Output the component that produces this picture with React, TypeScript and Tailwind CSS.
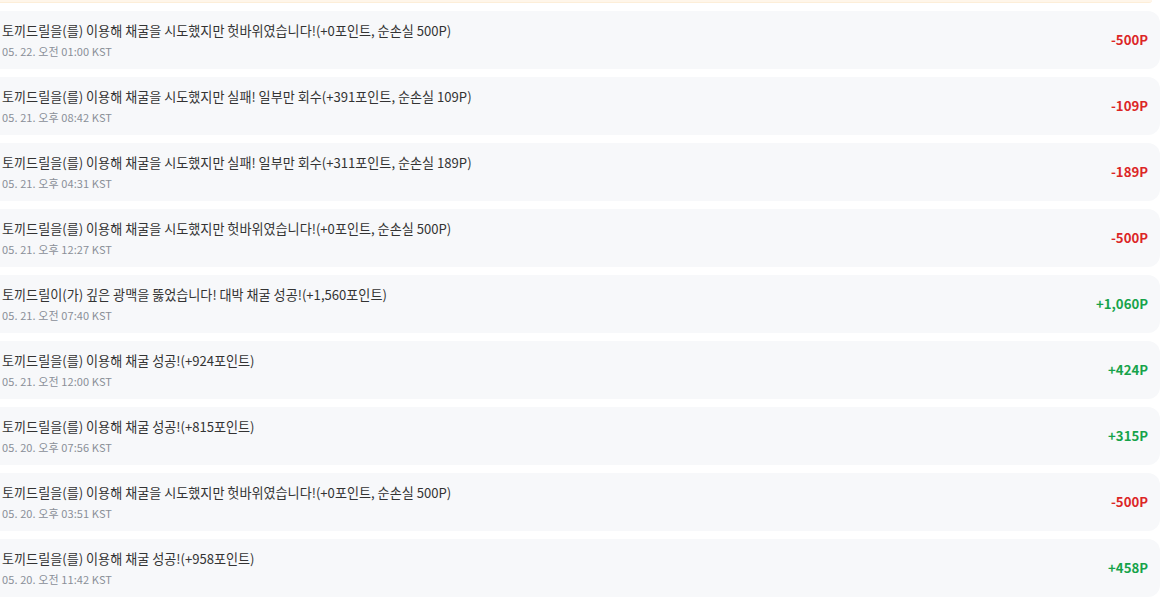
import React from "react";

type Item = { title: string; date: string; amount: string; positive: boolean };

const items: Item[] = [
  { title: "토끼드릴을(를) 이용해 채굴을 시도했지만 헛바위였습니다!(+0포인트, 순손실 500P)", date: "05. 22. 오전 01:00 KST", amount: "-500P", positive: false },
  { title: "토끼드릴을(를) 이용해 채굴을 시도했지만 실패! 일부만 회수(+391포인트, 순손실 109P)", date: "05. 21. 오후 08:42 KST", amount: "-109P", positive: false },
  { title: "토끼드릴을(를) 이용해 채굴을 시도했지만 실패! 일부만 회수(+311포인트, 순손실 189P)", date: "05. 21. 오후 04:31 KST", amount: "-189P", positive: false },
  { title: "토끼드릴을(를) 이용해 채굴을 시도했지만 헛바위였습니다!(+0포인트, 순손실 500P)", date: "05. 21. 오후 12:27 KST", amount: "-500P", positive: false },
  { title: "토끼드릴이(가) 깊은 광맥을 뚫었습니다! 대박 채굴 성공!(+1,560포인트)", date: "05. 21. 오전 07:40 KST", amount: "+1,060P", positive: true },
  { title: "토끼드릴을(를) 이용해 채굴 성공!(+924포인트)", date: "05. 21. 오전 12:00 KST", amount: "+424P", positive: true },
  { title: "토끼드릴을(를) 이용해 채굴 성공!(+815포인트)", date: "05. 20. 오후 07:56 KST", amount: "+315P", positive: true },
  { title: "토끼드릴을(를) 이용해 채굴을 시도했지만 헛바위였습니다!(+0포인트, 순손실 500P)", date: "05. 20. 오후 03:51 KST", amount: "-500P", positive: false },
  { title: "토끼드릴을(를) 이용해 채굴 성공!(+958포인트)", date: "05. 20. 오전 11:42 KST", amount: "+458P", positive: true },
];

export default function App() {
  return (
    <div
      className="w-[1166px] h-[604px] overflow-hidden bg-white"
      style={{ fontFamily: '"Noto Sans CJK KR", "Noto Sans", sans-serif' }}
    >
      <div className="w-[1174px] -ml-[14px]">
        <div className="h-[3px] w-[1166px] bg-[#fff6ea] rounded-b-xl border-b border-[#fdeed8]" />
        <div className="flex flex-col gap-2 mt-2">
          {items.map((it, i) => (
            <div
              key={i}
              className="h-[58px] w-[1174px] rounded-xl bg-[#f7f8fa] flex items-center justify-between pl-4 pr-3"
            >
              <div className="flex flex-col">
                <div className="text-[13.1px] leading-[20px] text-[#333333]">{it.title}</div>
                <div className="text-[11px] leading-[16px] text-[#8a8f98] mt-[2px] tracking-[0.1px]">{it.date}</div>
              </div>
              <div
                className={`text-[13.2px] font-bold ${it.positive ? "text-[#16a34a]" : "text-[#dc2626]"}`}
              >
                {it.amount}
              </div>
            </div>
          ))}
        </div>
      </div>
    </div>
  );
}
